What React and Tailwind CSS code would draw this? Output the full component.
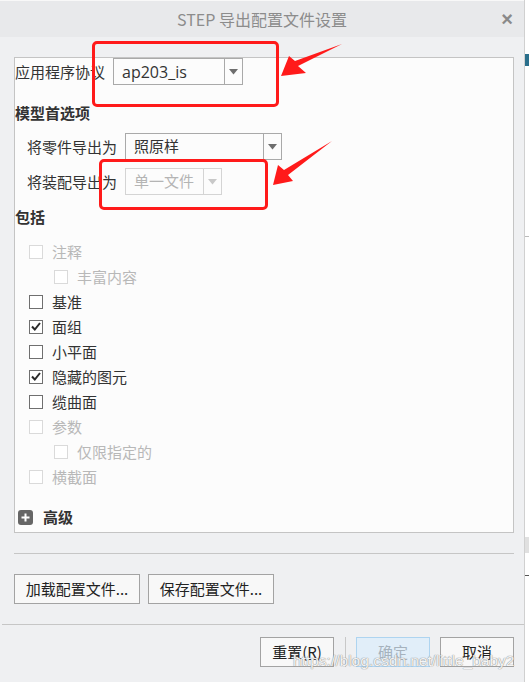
import React from "react";

const cjk = "font-['Noto_Sans_CJK_SC','Noto_Sans',sans-serif]";

function Caret({ disabled }) {
  return (
    <svg width="9" height="6" viewBox="0 0 9 6">
      <path d="M0 0 H9 L4.5 5.5 Z" fill={disabled ? "#c8c8c8" : "#6e6e6e"} />
    </svg>
  );
}

function Select({ value, width, disabled, latin }) {
  return (
    <div
      className={`flex h-[27px] border ${disabled ? "border-[#d4d4d4] text-[#b4b4b4]" : "border-[#a9a9a9] text-[#333]"} bg-[#fcfcfc]`}
      style={{ width }}
    >
      <div className={`flex-1 flex items-center pl-[8px] ${latin ? "text-[16px] font-['Open_Sans',sans-serif]" : "text-[15px]"}`}>
        {value}
      </div>
      <div className={`w-[18px] flex items-center justify-center border-l ${disabled ? "border-[#d4d4d4]" : "border-[#a9a9a9]"}`}>
        <Caret disabled={disabled} />
      </div>
    </div>
  );
}

function Check({ label, checked, disabled, nested }) {
  return (
    <div className={`h-[25px] flex items-center gap-[9px] ${nested ? "pl-[39px]" : "pl-[14px]"}`}>
      <div
        className={`w-[14px] h-[14px] border flex items-center justify-center bg-white ${disabled ? "border-[#dadada]" : "border-[#6f6f6f]"}`}
      >
        {checked && (
          <svg width="10" height="9" viewBox="0 0 10 9">
            <path d="M1 4.5 L3.8 7.5 L9 1" fill="none" stroke="#2a2a2a" strokeWidth="2" />
          </svg>
        )}
      </div>
      <span className={`text-[15px] leading-none ${disabled ? "text-[#b8b8b8]" : "text-[#333]"}`}>{label}</span>
    </div>
  );
}

function Btn({ children, w, primary }) {
  return (
    <div
      className={`h-[30px] flex items-center justify-center text-[15px] border ${primary ? "bg-[#e1eef9] border-[#aed4f0] text-[#a6b2bd]" : "bg-[#f8f8f8] border-[#a3a3a3] text-[#222]"}`}
      style={{ width: w }}
    >
      {children}
    </div>
  );
}

export default function App() {
  return (
    <div className={`relative w-[529px] h-[682px] bg-white flex overflow-hidden ${cjk}`}>
      <div className="w-[524px] h-full flex flex-col bg-[#eff0f2] border-t border-[#f8f8f8]">
        {/* title */}
        <div className="h-[36px] shrink-0 bg-[#e8e9eb] relative flex items-center justify-center">
          <span className="text-[16px] text-[#8c8c8c] font-['Noto_Sans_CJK_SC',sans-serif]">STEP 导出配置文件设置</span>
          <span className="absolute right-[11px] top-[8px] text-[20px] leading-none font-bold text-[#8a8a8a] font-['Liberation_Sans',sans-serif]">×</span>
        </div>

        {/* panel */}
        <div className="ml-[14px] mt-[20px] w-[500px] h-[476px] border border-[#c4c4c4] bg-[#fcfcfc] text-[#333]">
          <div className="flex items-center h-[27px]">
            <span className="w-[98px] text-[15px] leading-none">应用程序协议</span>
            <Select value="ap203_is" width={130} latin />
          </div>

          <div className="mt-[18px] h-[20px] flex items-center text-[15px] font-bold">模型首选项</div>

          <div className="mt-[10px] flex items-center pl-[12px]">
            <span className="w-[98px] text-[15px] leading-none">将零件导出为</span>
            <Select value="照原样" width={157} />
          </div>
          <div className="mt-[8px] flex items-center pl-[12px]">
            <span className="w-[98px] text-[15px] leading-none">将装配导出为</span>
            <Select value="单一文件" width={97} disabled />
          </div>

          <div className="mt-[12px] h-[20px] flex items-center text-[15px] font-bold">包括</div>

          <div className="mt-[12px] flex flex-col">
            <Check label="注释" disabled />
            <Check label="丰富内容" disabled nested />
            <Check label="基准" />
            <Check label="面组" checked />
            <Check label="小平面" />
            <Check label="隐藏的图元" checked />
            <Check label="缆曲面" />
            <Check label="参数" disabled />
            <Check label="仅限指定的" disabled nested />
            <Check label="横截面" disabled />
          </div>

          <div className="mt-[18px] h-[20px] flex items-center gap-[10px] pl-[3px]">
            <div className="w-[15px] h-[15px] rounded-[3px] bg-[#666] flex items-center justify-center">
              <svg width="9" height="9" viewBox="0 0 9 9">
                <path d="M4.5 0.5 V8.5 M0.5 4.5 H8.5" stroke="#fff" strokeWidth="2" />
              </svg>
            </div>
            <span className="text-[15px] font-bold">高级</span>
          </div>
        </div>

        <div className="ml-[14px] mt-[20px] w-[500px] h-px bg-[#c6c6c6]" />

        <div className="ml-[14px] mt-[20px] flex gap-[8px]">
          <Btn w={126}>加载配置文件...</Btn>
          <Btn w={126}>保存配置文件...</Btn>
        </div>

        <div className="ml-[2px] mt-[20px] w-[522px] h-px bg-[#c6c6c6]" />

        <div className="mt-[12px] flex items-center justify-end pr-[10px]">
          <Btn w={74}>
            <span>重置(<span className="underline">R</span>)</span>
          </Btn>
          <div className="w-px h-[30px] bg-[#c8c8c8] ml-[11px] mr-[10px]" />
          <Btn w={74} primary>确定</Btn>
          <div className="w-[10px]" />
          <Btn w={74}>取消</Btn>
        </div>
      </div>

      {/* right edge strip */}
      <div className="flex-1 h-full border-l border-[#d0d0d0] bg-white flex flex-col">
        <div className="mt-[54px] h-[12px] w-full bg-[#2a6f8c]" />
        <div className="mt-[170px] h-px w-full bg-[#bbb]" />
        <div className="mt-[300px] h-[16px] w-full bg-[#e0e0e0]" />
        <div className="mt-[22px] h-px w-full bg-[#555]" />
      </div>

      {/* red annotations */}
      <div className="absolute left-[92px] top-[41px] w-[187px] h-[66px] border-[3px] border-[#ff1a1a] rounded-[5px]" />
      <div className="absolute left-[99px] top-[159px] w-[169px] h-[51px] border-[3px] border-[#ff1a1a] rounded-[5px]" />
      <svg className="absolute left-0 top-0" width="529" height="682" viewBox="0 0 529 682">
        <polygon points="281,76 289,56 295,61 342,44 298,66 306,73" fill="#ff1a1a" />
        <polygon points="273,185 278,165 284,170 332,141 288,175 293,181" fill="#ff1a1a" />
      </svg>

      {/* watermark */}
      <div className="absolute left-[293px] top-[649px] text-[15.5px] text-white/90 font-['Liberation_Sans',sans-serif] [text-shadow:0_0_1px_#8a8a8a,0_0_1px_#8a8a8a]">
        https://blog.csdn.net/little_baby2
      </div>
    </div>
  );
}
